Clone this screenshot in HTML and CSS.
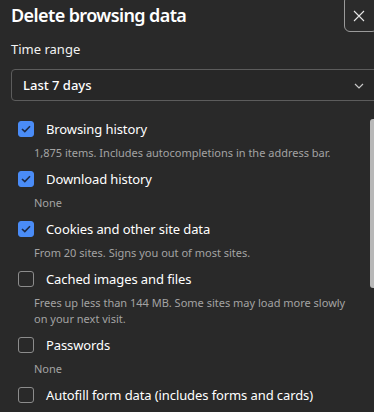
FILE: index.html
```html
<!DOCTYPE html>
<html>
<head>
<meta charset="utf-8">
<link rel="stylesheet" href="styles.css">
</head>
<body>
<div class="dialog">
  <header class="header">
    <h1 class="title">Delete browsing data</h1>
    <button class="close" aria-label="Close">
      <svg width="12" height="12" viewBox="0 0 12 12"><path d="M1 1L11 11M11 1L1 11" stroke="#e6e6e6" stroke-width="1.1" fill="none"/></svg>
    </button>
  </header>
  <div class="field-label">Time range</div>
  <div class="select">
    <span class="select-value">Last 7 days</span>
    <svg class="chevron" width="10" height="6" viewBox="0 0 10 6"><path d="M1 1L5 5L9 1" stroke="#c8c8c8" stroke-width="1.2" fill="none"/></svg>
  </div>
  <div class="list">
    <div class="item">
      <div class="row"><span class="cb checked"><svg width="10" height="8" viewBox="0 0 10 8"><path d="M1 4L3.8 6.6L9 1.2" stroke="#1c2a44" stroke-width="1.6" fill="none"/></svg></span><span class="label">Browsing history</span></div>
      <div class="desc">1,875 items. Includes autocompletions in the address bar.</div>
    </div>
    <div class="item">
      <div class="row"><span class="cb checked"><svg width="10" height="8" viewBox="0 0 10 8"><path d="M1 4L3.8 6.6L9 1.2" stroke="#1c2a44" stroke-width="1.6" fill="none"/></svg></span><span class="label">Download history</span></div>
      <div class="desc">None</div>
    </div>
    <div class="item">
      <div class="row"><span class="cb checked"><svg width="10" height="8" viewBox="0 0 10 8"><path d="M1 4L3.8 6.6L9 1.2" stroke="#1c2a44" stroke-width="1.6" fill="none"/></svg></span><span class="label">Cookies and other site data</span></div>
      <div class="desc">From 20 sites. Signs you out of most sites.</div>
    </div>
    <div class="item">
      <div class="row"><span class="cb"></span><span class="label">Cached images and files</span></div>
      <div class="desc">Frees up less than 144 MB. Some sites may load more slowly on your next visit.</div>
    </div>
    <div class="item">
      <div class="row"><span class="cb"></span><span class="label">Passwords</span></div>
      <div class="desc">None</div>
    </div>
    <div class="item">
      <div class="row"><span class="cb"></span><span class="label">Autofill form data (includes forms and cards)</span></div>
    </div>
  </div>
  <div class="scrollbar"></div>
</div>
</body>
</html>
```
FILE: styles.css
```css
html, body {
  margin: 0;
  padding: 0;
  background: #292929;
  overflow: hidden;
}
body {
  width: 374px;
  height: 412px;
  font-family: "Noto Sans", "Open Sans", sans-serif;
  color: #ffffff;
}
.dialog {
  position: relative;
  height: 412px;
  padding-left: 11px;
}
.header {
  display: flex;
  justify-content: space-between;
  align-items: flex-start;
  height: 34px;
}
.title {
  margin: 0;
  padding-top: 1px;
  font-size: 18px;
  line-height: 28px;
  font-weight: 600;
  letter-spacing: -0.6px;
}
.close {
  width: 34px;
  height: 37px;
  margin-top: -5px;
  margin-right: -4px;
  border: 1.5px solid #9a9a9a;
  border-radius: 6px;
  background: #2b2b2b;
  display: flex;
  align-items: center;
  justify-content: center;
  padding: 5px 4px 0 0;
}
.field-label {
  font-size: 13px;
  line-height: 20px;
  margin-top: 5px;
  color: #f2f2f2;
}
.select {
  margin-top: 10px;
  margin-right: -6px;
  height: 30px;
  border: 1px solid #5c5c5c;
  border-radius: 4px;
  background: #272727;
  display: flex;
  align-items: center;
  justify-content: space-between;
  padding: 0 15px 0 11px;
}
.select-value {
  font-size: 13px;
  font-weight: 500;
}
.chevron {
  margin-top: 1px;
}
.list {
  margin-top: 14px;
  padding-left: 7px;
}
.item {
  padding-bottom: 4px;
}
.row {
  display: flex;
  align-items: center;
  height: 28px;
}
.cb {
  width: 16px;
  height: 16px;
  box-sizing: border-box;
  border: 1px solid #8c8c8c;
  border-radius: 3px;
  display: flex;
  align-items: center;
  justify-content: center;
  flex: none;
}
.cb.checked {
  background: #4a8cf7;
  border-color: #4a8cf7;
}
.label {
  margin-left: 12px;
  font-size: 13px;
  letter-spacing: -0.1px;
  color: #ffffff;
}
.desc {
  margin-top: 2px;
  margin-left: 16px;
  margin-right: 16px;
  font-size: 11px;
  line-height: 16px;
  color: #a3a3a3;
}
.scrollbar {
  position: absolute;
  right: 0;
  top: 119px;
  width: 4px;
  height: 169px;
  background: #b8b8b8;
  border-radius: 3px 0 0 3px;
}
```
